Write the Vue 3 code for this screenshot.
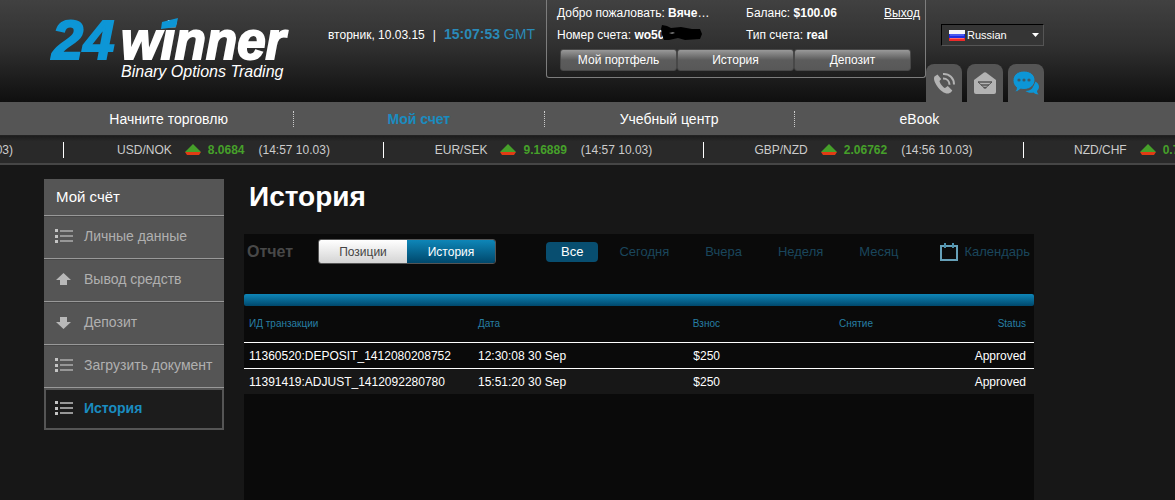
<script setup>
import { ref } from 'vue'

const language = ref('Russian')
const report = ref('История')
const period = ref('Все')

const accountLinks = ['Мой портфель', 'История', 'Депозит']
const nav = ['Начните торговлю', 'Мой счет', 'Учебный центр', 'eBook']
const quotes = [
  { pair: 'USD/NOK', rate: '8.0684', time: '(14:57 10.03)' },
  { pair: 'EUR/SEK', rate: '9.16889', time: '(14:57 10.03)' },
  { pair: 'GBP/NZD', rate: '2.06762', time: '(14:56 10.03)' },
]
const menu = [
  { label: 'Личные данные', icon: 'list' },
  { label: 'Вывод средств', icon: 'up' },
  { label: 'Депозит', icon: 'down' },
  { label: 'Загрузить документ', icon: 'list' },
  { label: 'История', icon: 'list', active: true },
]
const reports = ['Позиции', 'История']
const periods = ['Все', 'Сегодня', 'Вчера', 'Неделя', 'Месяц']
const rows = [
  { id: '11360520:DEPOSIT_1412080208752', date: '12:30:08 30 Sep', deposit: '$250', withdrawal: '', status: 'Approved' },
  { id: '11391419:ADJUST_1412092280780', date: '15:51:20 30 Sep', deposit: '$250', withdrawal: '', status: 'Approved' },
]
</script>

<template>
  <div class="page">
    <header class="header">
      <div class="inner">
        <a class="logo" href="#">
          <svg width="248" height="102" viewBox="0 0 248 102">
            <text class="logo-num" x="8" y="59">24</text>
            <text class="logo-name" x="77" y="59">winner</text>
            <path d="M118 22L134 18 132 27 117 29z" fill="#0d96d6" />
            <text class="logo-sub" x="77" y="77">Binary Options Trading</text>
          </svg>
        </a>
        <p class="clock">вторник, 10.03.15<span class="bar">|</span><span class="time"><b>15:07:53</b> GMT</span></p>

        <section class="account">
          <div class="facts">
            <span>Добро пожаловать: <b>Вяче</b>…</span>
            <span>Баланс: <b>$100.06</b></span>
            <a class="logout" href="#">Выход</a>
            <span>Номер счета: <b>wo50</b><svg class="scribble" width="42" height="18" viewBox="0 0 42 18"><path d="M0 4L1 0 6 1 10 3 20 2 31 4 39 4 41 9 39 14 24 15 17 13 8 15 3 15 1 10z" /><path d="M8 8l4-1 2 1-3 1z" fill="#777" /></svg></span>
            <span>Тип счета: <b>real</b></span>
          </div>
          <div class="account-links">
            <button v-for="l in accountLinks" :key="l" type="button">{{ l }}</button>
          </div>
        </section>

        <div class="tools">
          <label class="language">
            <svg width="16" height="11" viewBox="0 0 16 11">
              <path d="M0 0h16v4H0z" fill="#f4f4f8" /><path d="M0 4h16v4H0z" fill="#1c2be0" /><path d="M0 8h16v3H0z" fill="#ee2a2a" />
              <path d="M1 4h14v2H1z" fill="#4a58ee" /><path d="M1 8h14v1H1z" fill="#ff6a6a" />
            </svg>
            <select v-model="language" aria-label="Язык"><option>Russian</option></select>
            <svg class="caret" width="7" height="4" viewBox="0 0 7 4"><path d="M0 0h7L3.500 4z" fill="#fff" /></svg>
          </label>
          <div class="tabs">
            <button type="button" aria-label="Телефон">
              <svg width="24" height="24" viewBox="0 0 24 24">
                <path d="M5.500 3.500L2.500 5.500C1.500 7 2 10.500 5 15c3.500 5 8 8 11.500 7.500 1.500-.3 3-1.500 3.800-3L15.800 15l-2.800 2C11 16.500 7.500 12 7.500 10L9.200 8z" fill="#b3b3b3" />
                <path d="M11 7.500c4 0 6.500 2.800 6.500 6.300M11 3c6.500-.3 11 4 11 10.500" fill="none" stroke="#b3b3b3" stroke-width="2" />
              </svg>
            </button>
            <button type="button" aria-label="Почта">
              <svg width="24" height="24" viewBox="0 0 24 24">
                <path d="M1 9L11 1.500q1-.7 2 0L23 9v12q0 2-2 2H3q-2 0-2-2z" fill="#b3b3b3" />
                <path d="M5 11h14M8 14h8M10.500 16.500h3" stroke="#555" stroke-width="1.600" />
                <path d="M5 11l7 6.500 7-6.500" fill="none" stroke="#555" stroke-width="1" />
              </svg>
            </button>
            <button type="button" aria-label="Чат">
              <svg width="28" height="26" viewBox="0 0 28 26">
                <path d="M22 11c3 1 5 3 5 6q0 2-2 4c0 1.500 1 2.500 1.500 3.500-2 0-4-.8-5-2-3 .6-6 .3-8-1.500 5 0 9-3 8.500-10z" fill="#0d96d6" />
                <path d="M12 1c6.500 0 11 4 11 9s-4.500 9.500-11 9.500q-2 0-3.500-.5c-1.500 2-4 3-6 3 1.500-1.200 2-3 2-4.500C2.500 16 1 13.500 1 10.500 1 5 5.500 1 12 1z" fill="#0d96d6" stroke="#555" />
                <circle cx="7" cy="10" r="1.600" fill="#3c5a68" /><circle cx="12" cy="10" r="1.600" fill="#3c5a68" /><circle cx="17" cy="10" r="1.600" fill="#3c5a68" />
              </svg>
            </button>
          </div>
        </div>
      </div>
    </header>

    <nav class="nav">
      <ul class="inner">
        <li v-for="(n, i) in nav" :key="n"><a href="#" :class="{ active: i === 1 }">{{ n }}</a></li>
      </ul>
    </nav>

    <div class="ticker">
      <div class="quote first"><span>(14:57 10.03)</span></div>
      <div v-for="q in quotes" :key="q.pair" class="quote">
        <span>{{ q.pair }}</span>
        <svg class="trend" width="16" height="11" viewBox="0 0 16 11"><path d="M0 8L8 0l8 8z" fill="#46a02a" /><path d="M0 8h16l-2 3H2z" fill="#e03c14" /></svg>
        <b>{{ q.rate }}</b>
        <span class="when">{{ q.time }}</span>
      </div>
      <div class="quote last">
        <span>NZD/CHF</span>
        <svg class="trend" width="16" height="11" viewBox="0 0 16 11"><path d="M0 8L8 0l8 8z" fill="#46a02a" /><path d="M0 8h16l-2 3H2z" fill="#e03c14" /></svg>
        <b>0.7</b>
      </div>
    </div>

    <div class="inner content">
      <aside class="sidebar">
        <h2>Мой счёт</h2>
        <a v-for="m in menu" :key="m.label" href="#" :class="{ active: m.active }">
          <svg width="20" height="16" viewBox="0 0 20 16">
            <template v-if="m.icon === 'list'">
              <path d="M1 1h3v3H1zM1 7h3v3H1zM1 12h3v3H1z" fill="#c4c4c4" />
              <path d="M6 2h13v2H6zM6 7h13v2H6zM6 12h13v2H6z" fill="#979797" />
            </template>
            <path v-else-if="m.icon === 'up'" d="M9.500 2L17 9h-4v5H6V9H2z" fill="#b8b8b8" />
            <path v-else d="M6 3h7v5h4l-7.500 7L2 8h4z" fill="#b8b8b8" />
          </svg>
          <span>{{ m.label }}</span>
        </a>
      </aside>

      <main>
        <h1>История</h1>
        <section class="panel">
          <div class="filters">
            <h3>Отчет</h3>
            <div class="segment">
              <button v-for="r in reports" :key="r" type="button" :class="{ on: report === r }" @click="report = r">{{ r }}</button>
            </div>
            <div class="periods">
              <button v-for="p in periods" :key="p" type="button" :class="{ on: period === p }" @click="period = p">{{ p }}</button>
            </div>
            <button class="calendar" type="button">
              <svg width="18" height="18" viewBox="0 0 18 18">
                <path d="M1 3h16v14H1z" fill="none" stroke="#66a0b8" stroke-width="2" />
                <path d="M5 0v5M13 0v5" stroke="#4c91ad" stroke-width="2" />
              </svg>
              <span>Календарь</span>
            </button>
          </div>
          <div class="strip"></div>
          <table>
            <colgroup><col class="c-id" /><col class="c-date" /><col /><col /><col /></colgroup>
            <thead>
              <tr><th>ИД транзакции</th><th>Дата</th><th class="r">Взнос</th><th class="r">Снятие</th><th class="r">Status</th></tr>
            </thead>
            <tbody>
              <tr v-for="r in rows" :key="r.id">
                <td>{{ r.id }}</td><td>{{ r.date }}</td><td class="r">{{ r.deposit }}</td><td class="r">{{ r.withdrawal }}</td><td class="r">{{ r.status }}</td>
              </tr>
            </tbody>
          </table>
        </section>
      </main>
    </div>
  </div>
</template>

<style>
body {
  background: #171717;
}
</style>

<style scoped>
.page {
  display: flex;
  flex-direction: column;
  min-height: 100vh;
  font-family: "Liberation Sans", Arial, sans-serif;
  font-size: 12px;
  line-height: 16px;
  color: #fff;
  background: #171717;
  overflow: hidden;
}
.page * {
  box-sizing: border-box;
}
button, select {
  font: inherit;
  color: inherit;
  border: 0;
  padding: 0;
  background: none;
  cursor: pointer;
}
a {
  color: inherit;
  text-decoration: none;
}
svg {
  display: block;
  flex: none;
}
.inner {
  width: 100%;
  max-width: 1044px;
  padding-left: 44px;
}
.header {
  background: linear-gradient(#414141, #303030 45%, #0f0f0f);
}
.header .inner {
  display: flex;
  align-items: flex-start;
}
.logo-num, .logo-name {
  font-weight: bold;
  font-style: italic;
  stroke-width: 2;
}
.logo-num {
  font-size: 56px;
  fill: #0d96d6;
  stroke: #0d96d6;
}
.logo-name {
  font-size: 51px;
  fill: #fff;
  stroke: #fff;
}
.logo-sub {
  font-size: 16px;
  font-style: italic;
  fill: #fff;
}
.clock {
  flex: 1;
  margin: 26px 0 0 36px;
  white-space: nowrap;
}
.bar {
  margin: 0 8px;
}
.time {
  font-size: 14px;
  color: #2a8ab8;
}
.account {
  width: 380px;
  height: 78px;
  padding: 5px 14px 0 10px;
  border: 1px solid #7d7d7d;
  border-top: 0;
  border-radius: 0 0 3px 3px;
}
.facts {
  display: grid;
  grid-template-columns: 189px 1fr auto;
  grid-auto-rows: 16px;
  row-gap: 6px;
  margin-right: -9px;
}
.facts > span {
  display: flex;
  white-space: pre;
}
.logout {
  text-decoration: underline;
}
.scribble {
  margin: -2px 0 0 -3px;
}
.account-links {
  display: flex;
  margin: 6px 0 0 3px;
}
.account-links button {
  flex: 1;
  height: 22px;
  border: 1px solid #484848;
  border-radius: 3px;
  background: linear-gradient(#999, #5c5c5c 50%, #585858);
}
.tools {
  display: flex;
  flex-direction: column;
  align-items: flex-end;
  gap: 18px;
  padding-top: 24px;
  width: 118px;
}
.language {
  display: flex;
  align-items: center;
  width: 103px;
  height: 22px;
  padding: 0 4px 0 7px;
  border: 1px solid #555;
  border-top-color: #000;
  border-left-color: #000;
  background: #353535;
}
.language select {
  flex: 1;
  min-width: 0;
  appearance: none;
  padding-left: 2px;
  font-size: 11px;
}
.tabs {
  display: flex;
  gap: 5px;
}
.tabs button {
  display: flex;
  align-items: center;
  justify-content: center;
  width: 36px;
  height: 38px;
  border-radius: 8px 8px 0 0;
  background: #555;
}
.nav {
  background: #555;
  border-bottom: 1px solid #222;
}
.nav ul {
  display: flex;
  height: 33px;
  margin: 0;
  padding-top: 0;
  padding-bottom: 0;
  align-items: center;
  list-style: none;
  font-size: 14px;
}
.nav li {
  flex: 1;
  text-align: center;
}
.nav li + li {
  border-left: 1px dotted #ccc;
}
.nav .active {
  font-weight: bold;
  color: #1a8cc0;
}
.ticker {
  display: flex;
  height: 29px;
  align-items: center;
  overflow: hidden;
  color: #ccc;
  background: linear-gradient(#1c1c1c, #292929 20%);
  border-bottom: 2px solid #464646;
}
.quote {
  display: flex;
  flex: 0 0 320px;
  align-items: center;
  justify-content: center;
  white-space: nowrap;
  border-right: 1px solid #fff;
}
.quote.first {
  flex-basis: 64px;
  min-width: 0;
  overflow: hidden;
  justify-content: flex-end;
  padding-right: 50px;
}
.quote.last {
  justify-content: flex-start;
  padding-left: 50px;
}
.quote b {
  color: #46a02a;
}
.trend {
  margin: 0 7px 0 13px;
}
.when {
  margin-left: 14px;
}
.content {
  display: flex;
  flex: 1;
  gap: 20px;
  padding-top: 14px;
  padding-right: 10px;
}
.sidebar {
  width: 180px;
  flex: none;
  align-self: flex-start;
  background: #555;
  font-size: 14px;
}
.sidebar h2 {
  margin: 0;
  height: 36px;
  padding-left: 12px;
  font-size: 15px;
  font-weight: normal;
  line-height: 36px;
}
.sidebar a {
  display: flex;
  height: 43px;
  align-items: center;
  gap: 10px;
  padding: 0 0 2px 10px;
  color: #b0b0b0;
  border-top: 1px solid #999;
  box-shadow: inset 0 1px #484848;
  white-space: nowrap;
}
.sidebar .active {
  font-weight: bold;
  color: #1a8cc0;
  background: #1c1c1c;
  box-shadow: inset 0 0 0 2px #555;
}
main {
  display: flex;
  flex: 1;
  flex-direction: column;
  min-width: 0;
}
h1 {
  margin: 0;
  padding: 1px 0 20px 5px;
  font-size: 28px;
  line-height: 34px;
}
.panel {
  flex: 1;
  background: #0a0a0a;
}
.filters {
  display: flex;
  align-items: center;
  height: 35px;
  padding: 0 4px 0 3px;
  margin-bottom: 25px;
}
h3 {
  width: 71px;
  margin: 0;
  font-size: 16px;
  color: #484848;
}
.segment {
  display: flex;
  width: 178px;
  height: 25px;
  border: 1px solid #555;
  border-radius: 3px;
  overflow: hidden;
}
.segment button {
  flex: 1;
  color: #444;
  background: linear-gradient(#fff, #d4d4d4);
}
.segment .on {
  color: #fff;
  background: linear-gradient(#0e86b8, #00486c);
}
.periods {
  display: flex;
  flex: 1;
  gap: 6px;
  margin-left: 50px;
  color: #1a465c;
  font-size: 13px;
}
.periods button {
  height: 20px;
  padding: 0 15px;
  border-radius: 4px;
}
.periods .on {
  color: #fff;
  background: #084e70;
}
.calendar {
  display: flex;
  align-items: center;
  gap: 6px;
  font-size: 13px;
  color: #1a465c;
}
.strip {
  height: 12px;
  border-radius: 2px;
  background: linear-gradient(#0e86b8, #00486c);
}
table {
  width: 100%;
  table-layout: fixed;
  border-collapse: collapse;
}
.c-id {
  width: 229px;
}
.c-date {
  width: 102px;
}
th {
  height: 36px;
  padding: 0 5px;
  text-align: left;
  font-size: 10px;
  font-weight: normal;
  color: #277ea4;
}
td {
  height: 26px;
  padding: 2px 5px 0;
  border-top: 1px solid #fff;
  white-space: nowrap;
}
tbody tr:nth-child(2) {
  background: #171717;
}
.r {
  padding-right: 8px;
  text-align: right;
}
</style>
